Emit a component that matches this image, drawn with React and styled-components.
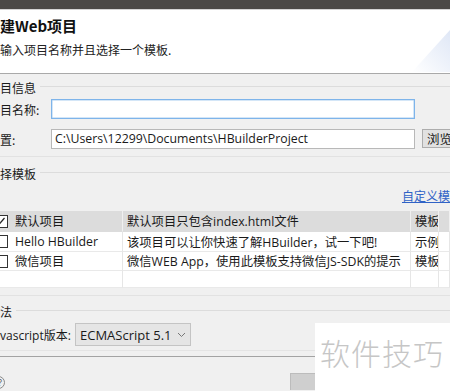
import React from "react";
import styled, { createGlobalStyle } from "styled-components";

const Global = createGlobalStyle`
  html, body { margin: 0; padding: 0; background: #f0f0f0; }
  body { width: 450px; height: 391px; overflow: hidden; }
  * { box-sizing: border-box; }
`;

const FONT = `"Open Sans", "Noto Sans CJK SC", sans-serif`;

const Dialog = styled.div`
  position: relative;
  width: 450px;
  height: 391px;
  overflow: hidden;
  background: #f0f0f0;
  font-family: ${FONT};
  font-size: 12px;
  color: #1a1a1a;
`;

const TopBar = styled.div`
  height: 9px;
  background: #4b4947;
  border-bottom: 1px solid #d4d4d4;
  box-sizing: content-box;
`;

const Header = styled.div`
  position: relative;
  height: 64px;
  background: #ffffff;
  border-bottom: 1px solid #a9a9a9;
  display: flex;
  flex-direction: column;
  padding-top: 6px;
`;

const Title = styled.div`
  font-weight: bold;
  font-size: 15px;
  line-height: 20px;
  color: #111;
  font-family: "Noto Sans CJK SC", sans-serif;
`;

const Subtitle = styled.div`
  margin-top: 4px;
  font-size: 12px;
  line-height: 20px;
  font-family: "Noto Sans CJK SC", sans-serif;
  color: #222;
`;

const Banner = styled.svg`
  position: absolute;
  right: 0;
  top: 16px;
`;

const Body = styled.div`
  display: flex;
  flex-direction: column;
`;

const GroupHeader = styled.div`
  display: flex;
  align-items: center;
  height: ${(p) => p.h || 22}px;
  margin-top: ${(p) => p.mt || 0}px;
  font-family: "Noto Sans CJK SC", sans-serif;
  font-size: 12px;
  &::after {
    content: "";
    flex: 1;
    height: 1px;
    background: #dcdcdc;
    margin-left: 4px;
    margin-top: -2px;
  }
`;

const FormRow = styled.div`
  display: flex;
  align-items: center;
  height: 20px;
  margin-top: ${(p) => p.mt || 0}px;
`;

const Label = styled.div`
  width: 51px;
  font-family: "Noto Sans CJK SC", sans-serif;
  font-size: 12px;
  flex-shrink: 0;
`;

const TextInput = styled.div`
  width: 364px;
  flex-shrink: 0;
  height: 20px;
  background: #fff;
  border: 1px solid ${(p) => (p.focused ? "#7eb4ea" : "#b8b8b8")};
  ${(p) => p.focused && "box-shadow: inset 0 0 0 0.5px #a9cdf0;"}
  font-size: 12.3px;
  line-height: 18px;
  padding-left: 3px;
  white-space: nowrap;
  overflow: hidden;
  font-family: ${FONT};
`;

const Button = styled.div`
  margin-left: 7px;
  height: 19px;
  width: 60px;
  flex-shrink: 0;
  background: #e1e1e1;
  border: 1px solid #adadad;
  font-family: "Noto Sans CJK SC", sans-serif;
  font-size: 12.5px;
  line-height: 17px;
  padding-left: 4px;
  align-self: flex-start;
`;

const Line = styled.div`
  height: 1px;
  background: ${(p) => p.color || "#e2e2e2"};
  margin-top: ${(p) => p.mt || 0}px;
`;

const LinkRow = styled.div`
  display: flex;
  justify-content: flex-end;
  height: 16px;
  margin-top: 4px;
  overflow: hidden;
`;

const Link = styled.span`
  color: #2f62c6;
  text-decoration: underline;
  font-family: "Noto Sans CJK SC", sans-serif;
  font-size: 12px;
  line-height: 16px;
  white-space: nowrap;
  margin-right: -12px;
`;

const Table = styled.div`
  margin-top: 7px;
  display: grid;
  grid-template-columns: 123px 288px 28px 11px;
  grid-template-rows: 21px 20px 19px 17px;
  background: #fff;
  font-size: 12.3px;
`;

const Cell = styled.div`
  display: flex;
  align-items: center;
  background: ${(p) => (p.head ? "#dcdcdc" : "#fff")};
  border-right: 1px solid ${(p) => (p.head ? "#f0f0f0" : "#e6e6e6")};
  border-bottom: 1px solid ${(p) => (p.head ? "#dcdcdc" : "#e9e9e9")};
  padding-left: ${(p) => p.pl ?? 4}px;
  white-space: nowrap;
  overflow: hidden;
  font-family: ${FONT};
`;

const Check = styled.span`
  width: 13px;
  height: 13px;
  margin-left: -5px;
  margin-right: 7px;
  border: 1px solid #333;
  background: #fff;
  flex-shrink: 0;
  display: flex;
  align-items: center;
  justify-content: center;
`;

const SelectRow = styled.div`
  display: flex;
  align-items: center;
  height: 23px;
  margin-top: 1px;
`;

const SelectLabel = styled.div`
  width: 75px;
  font-family: ${FONT};
  font-size: 12px;
`;

const Select = styled.div`
  width: 116px;
  height: 23px;
  background: #e5e5e5;
  border: 1px solid #c4c4c4;
  display: flex;
  align-items: center;
  justify-content: space-between;
  padding: 0 4px 0 4px;
  font-size: 13px;
  font-family: ${FONT};
`;

const Footer = styled.div`
  display: flex;
  align-items: flex-end;
  height: 33px;
`;

const Help = styled.div`
  width: 13px;
  height: 13px;
  border-radius: 50%;
  border: 1px solid #888;
  margin-left: -8px;
  margin-bottom: 1px;
  font-size: 9px;
  line-height: 11px;
  text-align: right;
  padding-right: 2px;
  color: #555;
`;

const FooterButton = styled.div`
  margin-left: 285px;
  width: 40px;
  height: 17px;
  background: #cfcfcf;
  border: 1px solid #bcbcbc;
  border-bottom: none;
`;

const Watermark = styled.div`
  position: absolute;
  left: 315px;
  top: 323px;
  width: 135px;
  height: 68px;
  background: #fff;
  font-family: "Noto Sans CJK SC", sans-serif;
  font-weight: 300;
  font-size: 30px;
  color: #c6c6c6;
  padding-left: 5px;
  padding-top: 12px;
  line-height: 34px;
  letter-spacing: 1px;
`;

const rows = [
  { checked: true, head: true, name: "默认项目", desc: "默认项目只包含index.html文件", type: "模板" },
  { name: "Hello HBuilder", desc: "该项目可以让你快速了解HBuilder，试一下吧!", type: "示例" },
  { name: "微信项目", desc: "微信WEB App，使用此模板支持微信JS-SDK的提示", type: "模板" },
];

export default function App() {
  return (
    <>
      <Global />
      <Dialog>
        <TopBar />
        <Header>
          <Title>建Web项目</Title>
          <Subtitle>输入项目名称并且选择一个模板.</Subtitle>
          <Banner width="40" height="48" viewBox="0 0 40 48">
            <defs>
              <linearGradient id="bg" x1="0" y1="1" x2="1" y2="0">
                <stop offset="0" stopColor="#ffffff" />
                <stop offset="1" stopColor="#dfe7f6" />
              </linearGradient>
            </defs>
            <path d="M2 46 L40 4 L40 46 Z" fill="url(#bg)" />
          </Banner>
        </Header>
        <Body>
          <GroupHeader mt={2}>目信息</GroupHeader>
          <FormRow mt={1}>
            <Label>目名称:</Label>
            <TextInput focused />
          </FormRow>
          <FormRow mt={10}>
            <Label>置:</Label>
            <TextInput>C:\Users\12299\Documents\HBuilderProject</TextInput>
            <Button>浏览</Button>
          </FormRow>
          <Line mt={7} />
          <GroupHeader mt={5}>择模板</GroupHeader>
          <LinkRow>
            <Link>自定义模板</Link>
          </LinkRow>
          <Table>
            {rows.map((r, i) => (
              <React.Fragment key={i}>
                <Cell head={r.head} pl={0}>
                  <Check>
                    {r.checked && (
                      <svg width="9" height="9" viewBox="0 0 9 9">
                        <path d="M1.5 8 L7.5 1" stroke="#222" strokeWidth="1.2" fill="none" />
                      </svg>
                    )}
                  </Check>
                  {r.name}
                </Cell>
                <Cell head={r.head}>{r.desc}</Cell>
                <Cell head={r.head}>{r.type}</Cell>
                <Cell head={r.head} />
              </React.Fragment>
            ))}
            <Cell pl={0} />
            <Cell />
            <Cell />
            <Cell />
          </Table>
          <Line mt={7} />
          <GroupHeader mt={5} h={21}>法</GroupHeader>
          <SelectRow>
            <SelectLabel>vascript版本:</SelectLabel>
            <Select>
              <span>ECMAScript 5.1</span>
              <svg width="9" height="6" viewBox="0 0 9 6">
                <path d="M1 1 L4.5 4.5 L8 1" stroke="#777" strokeWidth="1" fill="none" />
              </svg>
            </Select>
          </SelectRow>
          <Line mt={4} color="#e4e4e4" />
          <Line mt={5} color="#a3a3a3" />
          <Footer>
            <Help>?</Help>
            <FooterButton />
          </Footer>
        </Body>
        <Watermark>软件技巧</Watermark>
      </Dialog>
    </>
  );
}
